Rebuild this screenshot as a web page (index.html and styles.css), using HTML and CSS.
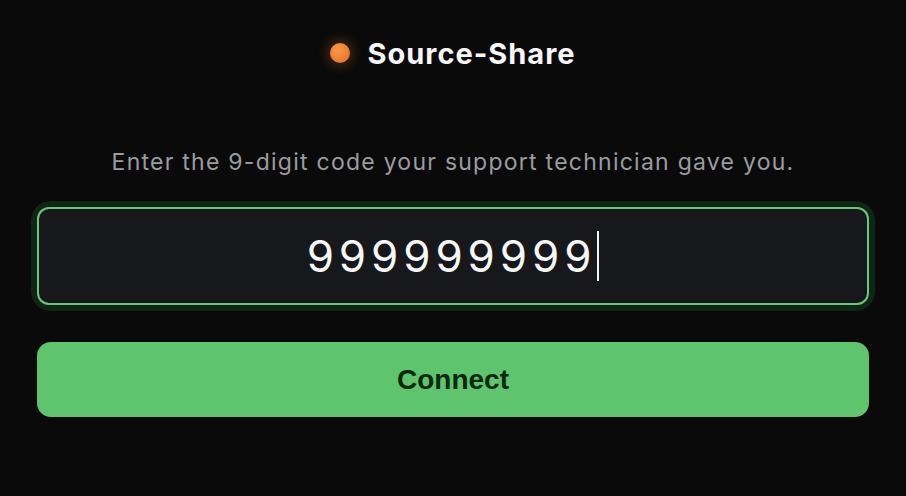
FILE: index.html
```html
<!DOCTYPE html>
<html lang="en">
<head>
<meta charset="utf-8">
<title>Source-Share</title>
<link rel="stylesheet" href="styles.css">
</head>
<body>
<main class="page">
  <header class="brand">
    <span class="dot"></span>
    <h1 class="title">Source-Share</h1>
  </header>
  <p class="hint">Enter the 9-digit code your support technician gave you.</p>
  <div class="code-field">
    <div class="code-input"><span class="code-value">999999999</span><span class="caret"></span></div>
  </div>
  <button class="connect" type="button">Connect</button>
</main>
</body>
</html>
```
FILE: styles.css
```css
html, body {
  margin: 0;
  padding: 0;
  background: #0a0a0a;
  height: 100%;
}
body {
  font-family: Inter, "Liberation Sans", sans-serif;
  color: #f5f5f7;
}
.page {
  width: 832px;
  margin: 0 auto;
  padding-top: 34px;
  display: flex;
  flex-direction: column;
  align-items: stretch;
}
.brand {
  display: flex;
  align-items: center;
  justify-content: center;
  gap: 17px;
  height: 38px;
}
.dot {
  width: 20px;
  height: 20px;
  border-radius: 50%;
  background: radial-gradient(circle at 40% 35%, #f59a4c 0%, #ec7f2e 60%, #d46a1e 100%);
  box-shadow: 0 0 12px 3px rgba(236, 127, 46, 0.28);
}
.title {
  margin: 0;
  font-size: 29px;
  font-weight: 700;
  color: #f7f7f8;
  letter-spacing: 1px;
}
.hint {
  margin: 70px 0 0;
  text-align: center;
  font-size: 23px;
  letter-spacing: 1.25px;
  line-height: 40px;
  color: #9b9ca1;
}
.code-field {
  margin-top: 25px;
  border-radius: 14px;
  box-shadow: 0 0 0 6px #0f2614;
}
.code-input {
  height: 94px;
  border: 2px solid #6cc679;
  border-radius: 12px;
  background: #17181b;
  display: flex;
  align-items: center;
  justify-content: center;
}
.code-value {
  font-size: 44px;
  letter-spacing: 4.9px;
  color: #f5f6f8;
  font-weight: 400;
}
.caret {
  display: inline-block;
  width: 2px;
  height: 50px;
  background: #f5f6f8;
  margin-left: 1px;
}
.connect {
  margin-top: 37px;
  height: 75px;
  border: none;
  border-radius: 14px;
  background: #5ec46d;
  color: #0c2811;
  font-family: "Liberation Sans", Arial, sans-serif;
  font-weight: 700;
  font-size: 28px;
  padding: 0;
  cursor: pointer;
}
```
